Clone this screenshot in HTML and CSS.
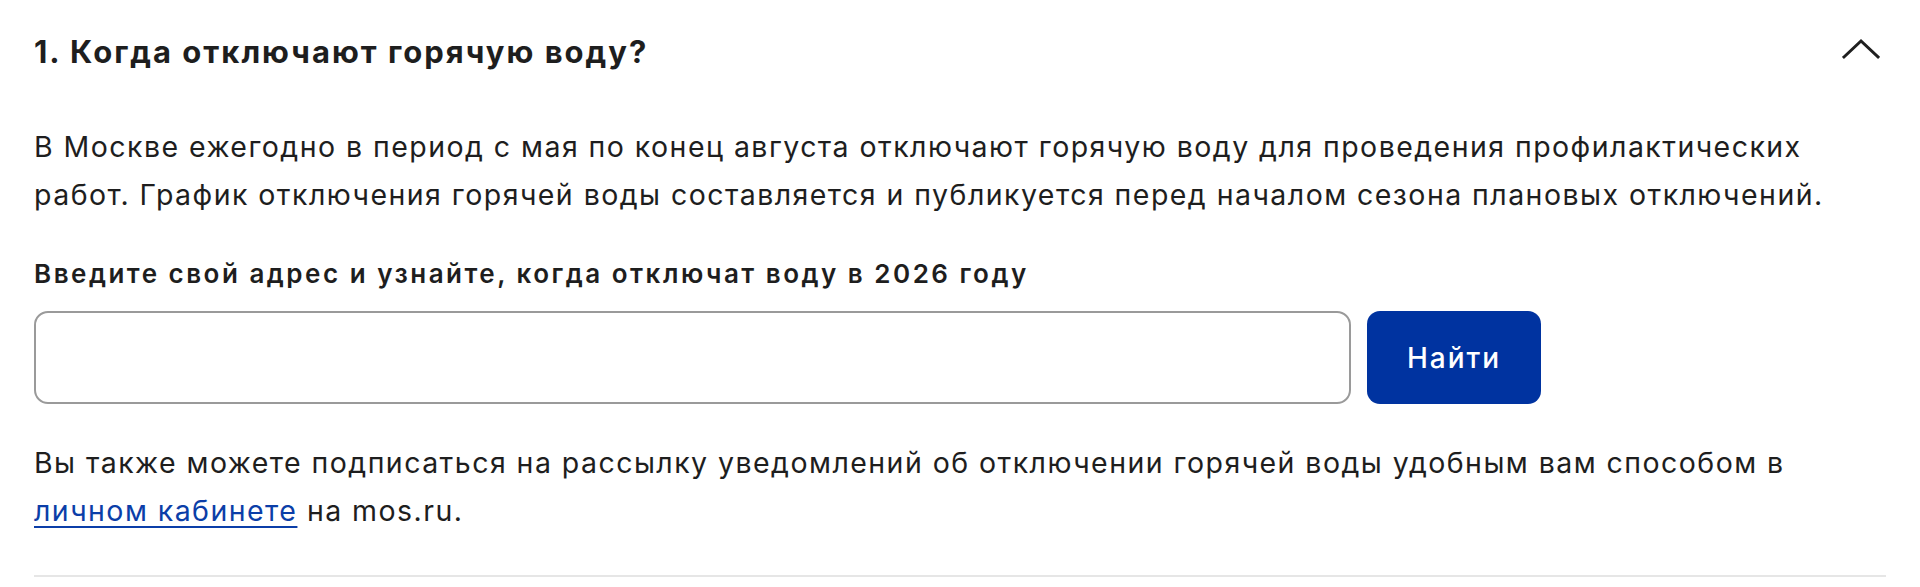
FILE: index.html
```html
<!DOCTYPE html>
<html lang="ru">
<head>
<meta charset="utf-8">
<title>Отключение горячей воды</title>
<link rel="stylesheet" href="styles.css">
</head>
<body>
<section class="faq-item">
  <div class="faq-head">
    <h3 class="faq-title">1. Когда отключают горячую воду?</h3>
    <button class="faq-toggle" type="button" aria-label="Свернуть">
      <svg width="38" height="22" viewBox="0 0 38 22" fill="none">
        <path d="M2 19 L19 3 L36 19" stroke="#1f1f1f" stroke-width="3" stroke-linecap="square"/>
      </svg>
    </button>
  </div>
  <div class="faq-body">
    <p class="text">В Москве ежегодно в период с мая по конец августа отключают горячую воду для проведения профилактических работ. График отключения горячей воды составляется и публикуется перед началом сезона плановых отключений.</p>
    <p class="label">Введите свой адрес и узнайте, когда отключат воду в 2026 году</p>
    <form class="search">
      <input class="search-input" type="text" aria-label="Адрес">
      <button class="search-btn" type="button">Найти</button>
    </form>
    <p class="text note">Вы также можете подписаться на рассылку уведомлений об отключении горячей воды удобным вам способом в <a href="#" class="link">личном кабинете</a> на mos.ru.</p>
  </div>
</section>
</body>
</html>
```
FILE: styles.css
```css
* { box-sizing: border-box; }

body {
  margin: 0;
  background: #fff;
  color: #1e1e1e;
  font-family: Inter, "Noto Sans", sans-serif;
}

.faq-item {
  margin: 0 34px;
  padding: 32px 0 40px;
  border-bottom: 2px solid #e6e6e6;
}

.faq-head {
  display: flex;
  align-items: center;
  justify-content: space-between;
}

.faq-title {
  margin: 0;
  font-size: 31px;
  line-height: 40px;
  font-weight: 700;
  letter-spacing: 2px;
}

.faq-toggle {
  border: 0;
  background: none;
  padding: 0 0 6px;
  margin-right: 6px;
  display: flex;
}

.faq-body {
  padding-top: 51px;
}

.text {
  margin: 0;
  font-size: 28.5px;
  line-height: 48px;
  font-weight: 400;
  letter-spacing: 1.45px;
}

.label {
  margin: 37px 0 0;
  font-size: 26px;
  line-height: 36px;
  font-weight: 600;
  letter-spacing: 2.5px;
}

.search {
  display: flex;
  gap: 16px;
  margin-top: 19px;
}

.search-input {
  width: 1317px;
  height: 93px;
  border: 2px solid #9a9a9a;
  border-radius: 14px;
  background: #fff;
}

.search-btn {
  width: 174px;
  height: 93px;
  border: 0;
  border-radius: 13px;
  background: #0033a0;
  color: #fff;
  font-family: Inter, "Noto Sans", sans-serif;
  font-size: 28px;
  font-weight: 500;
  letter-spacing: 2px;
}

.note {
  margin-top: 35px;
}

.link {
  color: #0b3ea8;
  text-decoration: underline;
  text-underline-offset: 5px;
  text-decoration-thickness: 2px;
}
```
